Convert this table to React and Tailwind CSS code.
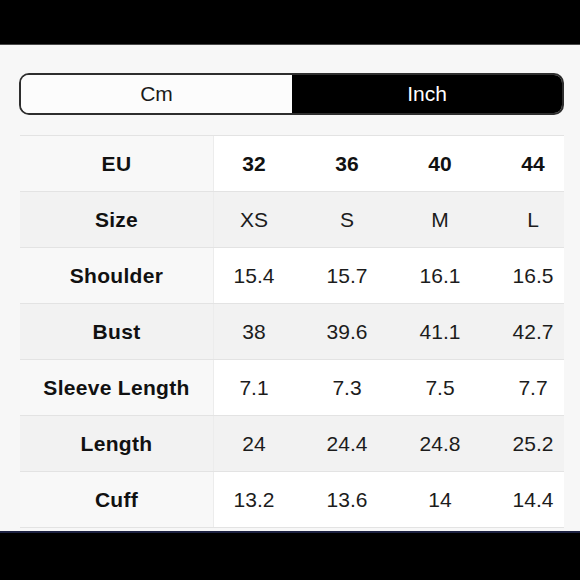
export default function App() {
  const rows = [
    { label: "EU", vals: ["32", "36", "40", "44"], head: true },
    { label: "Size", vals: ["XS", "S", "M", "L"] },
    { label: "Shoulder", vals: ["15.4", "15.7", "16.1", "16.5"] },
    { label: "Bust", vals: ["38", "39.6", "41.1", "42.7"] },
    { label: "Sleeve Length", vals: ["7.1", "7.3", "7.5", "7.7"] },
    { label: "Length", vals: ["24", "24.4", "24.8", "25.2"] },
    { label: "Cuff", vals: ["13.2", "13.6", "14", "14.4"] },
  ];
  return (
    <div className="w-[580px] h-[580px] bg-[#f7f7f7] flex flex-col font-['Liberation_Sans',Arial,sans-serif] overflow-hidden">
      <div className="h-[44px] bg-black shrink-0" />
      <div className="h-px bg-[#4a4a4a] shrink-0" />
      <div className="pl-[19px] pr-[16px] pt-[28px] shrink-0">
        <div className="h-[42px] flex rounded-[10px] border-2 border-[#2e2e2e] overflow-hidden">
          <div className="w-[271px] bg-[#fcfcfc] flex items-center justify-center text-[21px] text-[#1a1a1a]">
            Cm
          </div>
          <div className="flex-1 bg-black flex items-center justify-center text-[21px] text-white">
            Inch
          </div>
        </div>
      </div>
      <div className="pl-[20px] pr-[16px] pt-[20px] shrink-0">
        <div className="w-[544px] border-b border-[#e3e3e3]">
          {rows.map((r, i) => {
            const even = i % 2 === 1;
            return (
              <div
                key={r.label}
                className={
                  "grid grid-cols-[194px_93px_93px_93px_71px] h-[56px] border-t border-[#e3e3e3] " +
                  (even ? "bg-[#f2f2f2]" : "bg-white")
                }
              >
                <div
                  className={
                    "flex items-center justify-center font-bold text-[21px] tracking-[0.3px] text-[#111] border-r border-[#ececec] " +
                    (even ? "bg-[#f2f2f2]" : "bg-[#f8f8f8]")
                  }
                >
                  {r.label}
                </div>
                {r.vals.map((v, j) => (
                  <div
                    key={j}
                    className={
                      "flex items-center justify-center text-[21px] " +
                      (r.head ? "font-bold text-[#111] " : "text-[#1c1c1c] ") +
                      (j === 3 ? "pl-[9px]" : "pr-[13px]")
                    }
                  >
                    {v}
                  </div>
                ))}
              </div>
            );
          })}
        </div>
      </div>
      <div className="h-[3px] shrink-0" />
      <div className="h-[2px] bg-[#1d2242] shrink-0" />
      <div className="flex-1 bg-black" />
    </div>
  );
}
